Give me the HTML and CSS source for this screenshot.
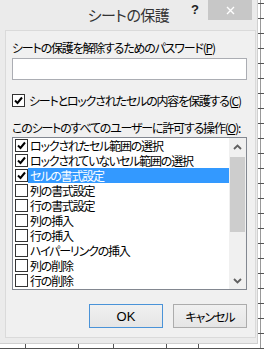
FILE: index.html
```html
<!DOCTYPE html>
<html lang="ja">
<head>
    <meta charset="UTF-8">
    <title>シートの保護</title>
    <link rel="stylesheet" href="styles.css">
</head>
<body>

<div class="dialog">
    <div class="titlebar">
        <span></span>
        <span class="title">シートの保護</span>
        <div class="controls">
            <span class="help">?</span>
            <span class="close">
                <svg width="9" height="9" viewBox="0 0 9 9"><path d="M1 1 L8 8 M8 1 L1 8" stroke="#fff" stroke-width="1.4"/></svg>
            </span>
        </div>
    </div>

    <div class="panel">
        <div class="label">シートの保護を解除するためのパスワード(<u>P</u>)</div>
        <div class="password"></div>

        <div class="check-row">
            <span class="box checked">
                <svg width="11" height="11" viewBox="0 0 11 11"><path d="M2 5.5 L4.5 8 L9 2.5" fill="none" stroke="#000" stroke-width="2"/></svg>
            </span>
            <span>シートとロックされたセルの内容を保護する(<u>C</u>)</span>
        </div>

        <div class="label allow">このシートのすべてのユーザーに許可する操作(<u>O</u>):</div>

        <div class="list">
            <div class="items">
                <div class="item">
                    <span class="box"><svg width="11" height="11" viewBox="0 0 11 11"><path d="M2 5.5 L4.5 8 L9 2.5" fill="none" stroke="#000" stroke-width="2"/></svg></span>
                    <span class="text">ロックされたセル範囲の選択</span>
                </div>
                <div class="item">
                    <span class="box"><svg width="11" height="11" viewBox="0 0 11 11"><path d="M2 5.5 L4.5 8 L9 2.5" fill="none" stroke="#000" stroke-width="2"/></svg></span>
                    <span class="text">ロックされていないセル範囲の選択</span>
                </div>
                <div class="item selected">
                    <span class="box"><svg width="11" height="11" viewBox="0 0 11 11"><path d="M2 5.5 L4.5 8 L9 2.5" fill="none" stroke="#000" stroke-width="2"/></svg></span>
                    <span class="text">セルの書式設定</span>
                </div>
                <div class="item"><span class="box"></span><span class="text">列の書式設定</span></div>
                <div class="item"><span class="box"></span><span class="text">行の書式設定</span></div>
                <div class="item"><span class="box"></span><span class="text">列の挿入</span></div>
                <div class="item"><span class="box"></span><span class="text">行の挿入</span></div>
                <div class="item"><span class="box"></span><span class="text">ハイパーリンクの挿入</span></div>
                <div class="item"><span class="box"></span><span class="text">列の削除</span></div>
                <div class="item"><span class="box"></span><span class="text">行の削除</span></div>
            </div>
            <div class="scrollbar">
                <span class="arrow">
                    <svg width="9" height="6" viewBox="0 0 9 6"><path d="M1 5 L4.5 1.5 L8 5" fill="none" stroke="#606060" stroke-width="1.8"/></svg>
                </span>
                <div class="track"><div class="thumb"></div></div>
                <span class="arrow">
                    <svg width="9" height="6" viewBox="0 0 9 6"><path d="M1 1 L4.5 4.5 L8 1" fill="none" stroke="#606060" stroke-width="1.8"/></svg>
                </span>
            </div>
        </div>

        <div class="buttons">
            <button class="ok">OK</button>
            <button>キャンセル</button>
        </div>
    </div>
</div>

</body>
</html>
```

FILE: styles.css
```css
* {
    margin: 0;
    padding: 0;
    box-sizing: border-box;
}

body {
    width: 264px;
    height: 349px;
    overflow: hidden;
    font-family: 'Noto Sans CJK JP', 'Liberation Sans', sans-serif;
    font-feature-settings: "palt";
    font-size: 12px;
    letter-spacing: -1.2px;
    color: #000;
    background-color: #fff;
    background-image:
        repeating-linear-gradient(180deg, transparent 0 3px, #555 3px 4px, transparent 4px 15px),
        linear-gradient(90deg, transparent 25px, #555 25px 26px, transparent 26px 78px, #555 78px 79px,
            transparent 79px 113px, #555 113px 114px, transparent 114px 166px, #555 166px 167px,
            transparent 167px 198px, #555 198px 199px, transparent 199px 260px, #999 260px 261px, transparent 261px);
}

.dialog {
    width: 258px;
    height: 344px;
    background: #ebebeb;
    border-right: 1px solid #d0d0d0;
    border-bottom: 1px solid #d0d0d0;
}

.titlebar {
    height: 30px;
    display: grid;
    grid-template-columns: 1fr auto 1fr;
}

.title {
    font-size: 15px;
    letter-spacing: -0.5px;
    line-height: 30px;
    color: #333;
}

.controls {
    display: flex;
    justify-content: flex-end;
    align-items: flex-start;
    margin-right: 5px;
}

.help {
    font-family: 'Liberation Sans', sans-serif;
    font-weight: bold;
    font-size: 13px;
    letter-spacing: 0;
    line-height: 20px;
    color: #222;
    margin-right: 9px;
}

.close {
    width: 44px;
    height: 20px;
    background: #c7c7c7;
    display: flex;
    align-items: center;
    justify-content: center;
}

.panel {
    margin: 0 1px 0 5px;
    height: 308px;
    border: 1px solid #dadada;
    background: #f0f0f0;
    padding: 9px 8px 0 6px;
}

.label {
    line-height: 15px;
    white-space: nowrap;
}

.password {
    margin-top: 3px;
    height: 22px;
    background: #fff;
    border: 1px solid #abadb3;
}

.check-row {
    margin-top: 13px;
    display: flex;
    align-items: center;
    gap: 4px;
    line-height: 15px;
    white-space: nowrap;
}

.box {
    width: 13px;
    height: 13px;
    flex: none;
    border: 1px solid #333;
    background: #fff;
    display: flex;
    align-items: center;
    justify-content: center;
}

.allow {
    margin-top: 12px;
}

.list {
    margin-top: 2px;
    height: 153px;
    border: 1px solid #828790;
    background: #fff;
    display: flex;
}

.items {
    flex: 1;
}

.item {
    height: 15px;
    display: flex;
    align-items: center;
    padding-left: 2px;
    white-space: nowrap;
}

.item .text {
    flex: 1;
    line-height: 15px;
    padding-left: 2px;
}

.item.selected .text {
    background: #3399ff;
    color: #fff;
}

.scrollbar {
    width: 17px;
    background: #f0f0f0;
    display: flex;
    flex-direction: column;
}

.arrow {
    height: 17px;
    display: flex;
    align-items: center;
    justify-content: center;
}

.track {
    flex: 1;
    padding: 2px 1px 0;
}

.thumb {
    height: 75px;
    background: #cdcdcd;
}

.buttons {
    margin-top: 14px;
    display: flex;
    justify-content: flex-end;
    gap: 10px;
}

.buttons button {
    width: 74px;
    height: 24px;
    font-family: inherit;
    font-feature-settings: "palt";
    font-size: 12px;
    letter-spacing: -1px;
    color: #000;
    background: linear-gradient(#f0f0f0, #e5e5e5);
    border: 1px solid #acacac;
}

.buttons .ok {
    border-color: #4a93d8;
    font-family: 'Liberation Sans', sans-serif;
    font-size: 13px;
    letter-spacing: 0;
}
```
